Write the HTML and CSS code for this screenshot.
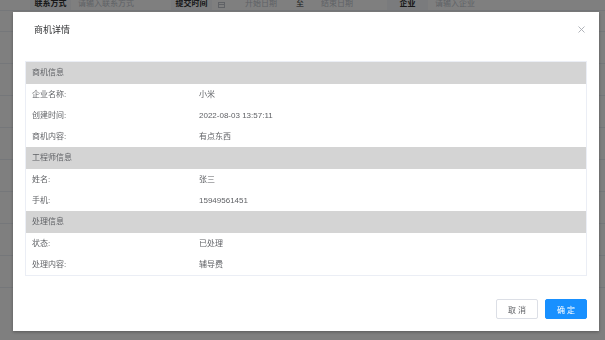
FILE: index.html
```html
<!DOCTYPE html>
<html lang="zh-CN">
<head>
    <meta charset="UTF-8">
    <meta name="viewport" content="width=device-width, initial-scale=1.0">
    <title>商机管理</title>
    <link rel="stylesheet" href="styles.css">
</head>
<body>
    <div class="page">
        <div class="search">
            <span class="field-label">联系方式</span>
            <span class="field-input contact">请输入联系方式</span>
            <span class="field-label">提交时间</span>
            <span class="field-input date">
                <svg class="cal" width="7" height="7" viewBox="0 0 7 7"><rect x="0.5" y="1.5" width="6" height="5" fill="none" stroke="#c0c4cc" stroke-width="1"/><line x1="0.5" y1="3.5" x2="6.5" y2="3.5" stroke="#c0c4cc"/></svg>
                <span class="start">开始日期</span>
                <span class="sep">至</span>
                <span class="end">结束日期</span>
            </span>
            <span class="field-label">企业</span>
            <span class="field-input company">请输入企业</span>
        </div>
        <div class="list">
            <div class="list-row"></div>
            <div class="list-row"></div>
            <div class="list-row"></div>
            <div class="list-row"></div>
            <div class="list-row"></div>
            <div class="list-row"></div>
            <div class="list-row"></div>
            <div class="list-row"></div>
            <div class="list-row"></div>
        </div>
    </div>

    <div class="mask"></div>
    <div class="dialog">
        <div class="dialog-header">
            <span class="dialog-title">商机详情</span>
            <svg class="dialog-close" width="7" height="7" viewBox="0 0 7 7"><path d="M0.5 0.5 L6.5 6.5 M6.5 0.5 L0.5 6.5" stroke="#a8abb2" stroke-width="0.9"/></svg>
        </div>
        <div class="dialog-body">
            <table class="detail">
                <tr class="group"><td colspan="2">商机信息</td></tr>
                <tr><td class="label">企业名称:</td><td>小米</td></tr>
                <tr><td class="label">创建时间:</td><td>2022-08-03 13:57:11</td></tr>
                <tr><td class="label">商机内容:</td><td>有点东西</td></tr>
                <tr class="group"><td colspan="2">工程师信息</td></tr>
                <tr><td class="label">姓名:</td><td>张三</td></tr>
                <tr><td class="label">手机:</td><td>15949561451</td></tr>
                <tr class="group"><td colspan="2">处理信息</td></tr>
                <tr><td class="label">状态:</td><td>已处理</td></tr>
                <tr><td class="label">处理内容:</td><td>辅导费</td></tr>
            </table>
        </div>
        <div class="dialog-footer">
            <button class="btn">取 消</button>
            <button class="btn btn-primary">确 定</button>
        </div>
    </div>
</body>
</html>
```

FILE: styles.css
```css
body {
    margin: 0;
    background: #fff;
    font-family: "Liberation Sans", "Noto Sans CJK SC", sans-serif;
    font-size: 8px;
    color: #606266;
    overflow: hidden;
}
.page {
    height: 340px;
}
.search {
    display: flex;
    height: 12px;
    margin-top: -2px;
    padding-left: 30px;
    line-height: 12px;
}
.field-label {
    width: 41px;
    flex: none;
    background: #f5f7fa;
    color: #303133;
    font-weight: bold;
    text-align: center;
}
.field-input {
    flex: none;
    color: #c0c4cc;
    padding-left: 7px;
    box-sizing: border-box;
}
.contact {
    width: 100px;
}
.date {
    width: 175px;
    display: flex;
    align-items: center;
    padding-left: 6px;
}
.date .cal {
    margin-right: 20px;
}
.date .sep {
    color: #303133;
    margin: 0 17px 0 19px;
}
.company {
    width: 120px;
}
.list {
    border-top: 1px solid #ebeef5;
}
.list-row {
    height: 20px;
    border-bottom: 1px solid #ebeef5;
}
.list-row + .list-row {
    height: 31px;
}
.mask {
    position: fixed;
    top: 0;
    left: 0;
    right: 0;
    bottom: 0;
    background: rgba(0, 0, 0, 0.5);
}
.dialog {
    position: absolute;
    left: 13px;
    top: 12px;
    width: 586px;
    height: 319px;
    background: #fff;
    box-sizing: border-box;
    padding: 0 12px 12px;
    display: flex;
    flex-direction: column;
    box-shadow: 0 1px 3px rgba(0, 0, 0, 0.3);
}
.dialog-header {
    position: relative;
    padding-top: 12px;
    height: 13px;
}
.dialog-title {
    display: block;
    font-size: 9px;
    line-height: 13px;
    color: #303133;
    padding-left: 9px;
}
.dialog-close {
    position: absolute;
    right: 2px;
    top: 14px;
}
.dialog-body {
    padding-top: 24px;
}
.detail {
    width: 100%;
    border-collapse: collapse;
    border: 1px solid #ebeef5;
}
.detail td {
    height: 21px;
    padding: 0;
    line-height: 21px;
}
.detail .label {
    width: 167px;
    padding-left: 6px;
}
.detail .group td {
    height: 22px;
    line-height: 22px;
    background: #d4d4d4;
    padding-left: 6px;
}
.dialog-footer {
    margin-top: auto;
    display: flex;
    justify-content: flex-end;
    gap: 7px;
}
.btn {
    width: 42px;
    height: 20px;
    border: 1px solid #dcdfe6;
    border-radius: 2px;
    background: #fff;
    color: #606266;
    font-family: inherit;
    font-size: 8px;
    padding: 0;
    cursor: pointer;
}
.btn-primary {
    background: #1890ff;
    border-color: #1890ff;
    color: #fff;
}
```
